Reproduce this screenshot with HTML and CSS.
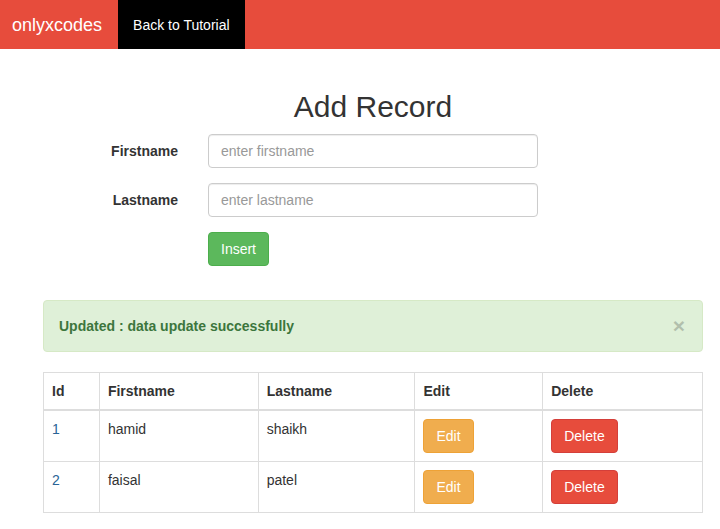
FILE: index.html
```html
<!DOCTYPE html>
<html>
<head>
<meta charset="utf-8">
<link rel="stylesheet" href="styles.css">
</head>
<body>
<nav class="navbar">
  <a class="brand" href="#">onlyxcodes</a>
  <a class="nav-link" href="#">Back to Tutorial</a>
</nav>
<main class="main">
  <h1 class="title">Add Record</h1>
  <form class="form">
    <div class="form-row">
      <label class="label">Firstname</label>
      <input class="input" type="text" placeholder="enter firstname">
    </div>
    <div class="form-row">
      <label class="label">Lastname</label>
      <input class="input" type="text" placeholder="enter lastname">
    </div>
    <div class="form-row actions">
      <span class="label"></span>
      <button class="btn btn-success" type="button">Insert</button>
    </div>
  </form>
  <div class="alert">
    <span>Updated : data update successfully</span>
    <span class="close">&times;</span>
  </div>
  <table class="table">
    <thead>
      <tr>
        <th class="c-id">Id</th>
        <th class="c-first">Firstname</th>
        <th class="c-last">Lastname</th>
        <th class="c-edit">Edit</th>
        <th class="c-del">Delete</th>
      </tr>
    </thead>
    <tbody>
      <tr>
        <td class="id">1</td>
        <td>hamid</td>
        <td>shaikh</td>
        <td><button class="btn btn-warning" type="button">Edit</button></td>
        <td><button class="btn btn-danger" type="button">Delete</button></td>
      </tr>
      <tr>
        <td class="id">2</td>
        <td>faisal</td>
        <td>patel</td>
        <td><button class="btn btn-warning" type="button">Edit</button></td>
        <td><button class="btn btn-danger" type="button">Delete</button></td>
      </tr>
    </tbody>
  </table>
</main>
</body>
</html>
```
FILE: styles.css
```css
* { box-sizing: border-box; }
html, body { margin: 0; padding: 0; background: #fff; }
body {
  font-family: "Liberation Sans", Arial, sans-serif;
  font-size: 14px;
  line-height: 20px;
  color: #333;
}
.navbar {
  display: flex;
  align-items: stretch;
  height: 49px;
  background: #e74c3c;
}
.brand {
  display: flex;
  align-items: center;
  padding: 0 16px 0 12px;
  font-size: 18px;
  color: #fff;
  text-decoration: none;
}
.nav-link {
  display: flex;
  align-items: center;
  padding: 0 15px;
  background: #000;
  color: #fff;
  text-decoration: none;
}
.main {
  width: 660px;
  margin-left: 43px;
}
.title {
  margin: 40.6px 0 11px;
  font-size: 30px;
  line-height: 33px;
  font-weight: normal;
  text-align: center;
  color: #333;
}
.form { margin: 0 0 34px; }
.form-row {
  display: flex;
  align-items: center;
  gap: 30px;
  margin-bottom: 15px;
}
.form-row.actions { margin-bottom: 0; }
.label {
  width: 135px;
  text-align: right;
  font-weight: bold;
}
.input {
  width: 330px;
  height: 34px;
  padding: 6px 12px;
  font: inherit;
  color: #555;
  border: 1px solid #ccc;
  border-radius: 4px;
  box-shadow: inset 0 1px 1px rgba(0,0,0,.075);
}
.input::placeholder { color: #999; }
.btn {
  height: 34px;
  padding: 6px 12px;
  font: inherit;
  color: #fff;
  border: 1px solid transparent;
  border-radius: 4px;
  cursor: pointer;
}
.btn-success { background: #5cb85c; border-color: #4cae4c; }
.btn-warning { background: #f0ad4e; border-color: #eea236; }
.btn-danger { background: #e74c3c; border-color: #d43f3a; }
.alert {
  display: flex;
  justify-content: space-between;
  align-items: center;
  height: 52px;
  padding: 15px 17px 15px 15px;
  margin-bottom: 20px;
  background: #dff0d8;
  border: 1px solid #d6e9c6;
  border-radius: 4px;
  color: #3c763d;
  font-weight: bold;
}
.close {
  font-size: 21px;
  font-weight: bold;
  color: #000;
  opacity: .2;
  line-height: 1;
}
.table {
  width: 660px;
  border-collapse: collapse;
  border: 1px solid #ddd;
}
.table th, .table td {
  padding: 8px;
  border: 1px solid #ddd;
  text-align: left;
  vertical-align: top;
  line-height: 20px;
}
.table th {
  vertical-align: bottom;
  border-bottom: 2px solid #ddd;
}
.c-id { width: 56px; }
.c-first { width: 159px; }
.c-last { width: 157px; }
.c-edit { width: 128px; }
.c-del { width: 160px; }
.id { color: #2a6496; }
```
